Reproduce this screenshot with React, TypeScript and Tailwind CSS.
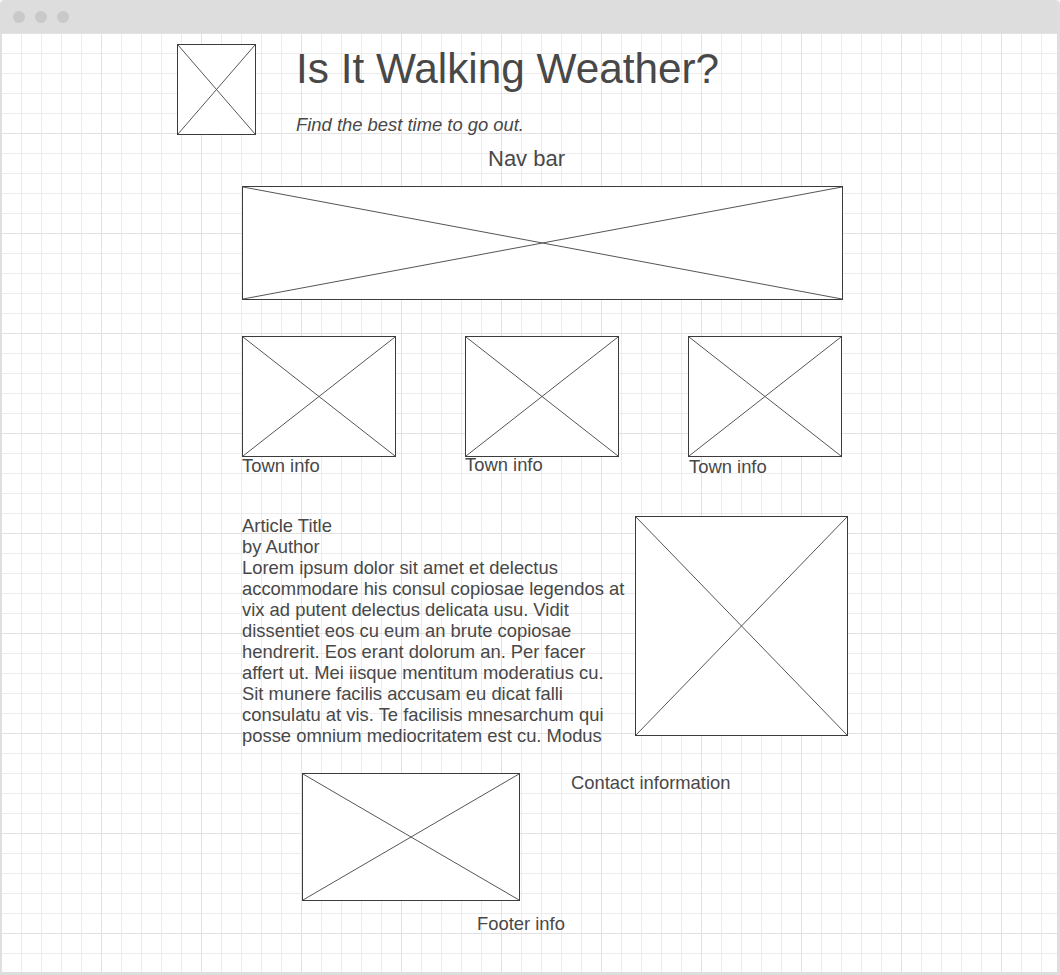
import clsx from 'clsx';

const articleLines = [
  'Article Title',
  'by Author',
  'Lorem ipsum dolor sit amet et delectus',
  'accommodare his consul copiosae legendos at',
  'vix ad putent delectus delicata usu. Vidit',
  'dissentiet eos cu eum an brute copiosae',
  'hendrerit. Eos erant dolorum an. Per facer',
  'affert ut. Mei iisque mentitum moderatius cu.',
  'Sit munere facilis accusam eu dicat falli',
  'consulatu at vis. Te facilisis mnesarchum qui',
  'posse omnium mediocritatem est cu. Modus',
];

function Placeholder({ className }: { className?: string }) {
  return (
    <div className={clsx('shrink-0 border border-[#3c3c3c] bg-white', className)}>
      <svg className="block h-full w-full" viewBox="0 0 100 100" preserveAspectRatio="none">
        <line x1="0" y1="0" x2="100" y2="100" stroke="#555" strokeWidth="1" vectorEffect="non-scaling-stroke" />
        <line x1="100" y1="0" x2="0" y2="100" stroke="#555" strokeWidth="1" vectorEffect="non-scaling-stroke" />
      </svg>
    </div>
  );
}

export default function App() {
  return (
    <div className="h-[975px] w-[1060px] overflow-hidden bg-white font-['Liberation_Sans',Arial,sans-serif] text-[#484848]">
      <div className="flex h-full flex-col overflow-hidden rounded-t-[4px] border-b-[3px] border-l border-r-[3px] border-[#dedede]">
        {/* window chrome */}
        <div className="flex h-[33px] shrink-0 items-center gap-[10px] bg-[#dddddd] pl-[12px]">
          <span className="h-[12px] w-[12px] rounded-full bg-[#c9c9c9]" />
          <span className="h-[12px] w-[12px] rounded-full bg-[#c9c9c9]" />
          <span className="h-[12px] w-[12px] rounded-full bg-[#c9c9c9]" />
        </div>

        {/* grid canvas */}
        <div className="flex flex-1 flex-col bg-white bg-[linear-gradient(to_right,#e2e2e2_1px,transparent_1px),linear-gradient(to_bottom,#e2e2e2_1px,transparent_1px),linear-gradient(to_right,#ececec_1px,transparent_1px),linear-gradient(to_bottom,#ececec_1px,transparent_1px)] bg-[length:100px_100px,100px_100px,20px_20px,20px_20px] pt-px text-[18.4px] leading-[21px]">
          {/* header */}
          <div className="ml-[176px] mt-[10px] flex">
            <Placeholder className="h-[91px] w-[79px]" />
            <div className="ml-[40px] flex flex-col">
              <h1 className="mt-[4px] text-[42.3px] leading-[42px] font-normal">Is It Walking Weather?</h1>
              <p className="mt-[26px] text-[18.4px] leading-[18px] italic">Find the best time to go out.</p>
            </div>
          </div>

          <p className="ml-[487px] mt-[13px] text-[22px] leading-[22px]">Nav bar</p>
          <Placeholder className="ml-[241px] mt-[16px] h-[114px] w-[601px]" />

          {/* towns */}
          <div className="ml-[241px] mt-[36px] flex gap-[69px]">
            <div className="flex w-[154px] flex-col">
              <Placeholder className="h-[121px] w-[154px]" />
              <span className="-mt-[2px]">Town info</span>
            </div>
            <div className="flex w-[154px] flex-col">
              <Placeholder className="h-[121px] w-[154px]" />
              <span className="-mt-[3px]">Town info</span>
            </div>
            <div className="flex w-[154px] flex-col">
              <Placeholder className="h-[121px] w-[154px]" />
              <span className="-mt-px pl-[1px]">Town info</span>
            </div>
          </div>

          {/* article */}
          <div className="ml-[241px] mt-[39px] flex items-start">
            <div className="-mt-px w-[393px] whitespace-nowrap">
              {articleLines.map((line) => (
                <p key={line}>{line}</p>
              ))}
            </div>
            <Placeholder className="h-[220px] w-[213px]" />
          </div>

          {/* footer */}
          <div className="ml-[301px] mt-[27px] flex items-start">
            <Placeholder className="h-[128px] w-[218px]" />
            <span className="-mt-px ml-[51px]">Contact information</span>
          </div>
          <p className="ml-[476px] mt-[12px]">Footer info</p>
        </div>
      </div>
    </div>
  );
}
